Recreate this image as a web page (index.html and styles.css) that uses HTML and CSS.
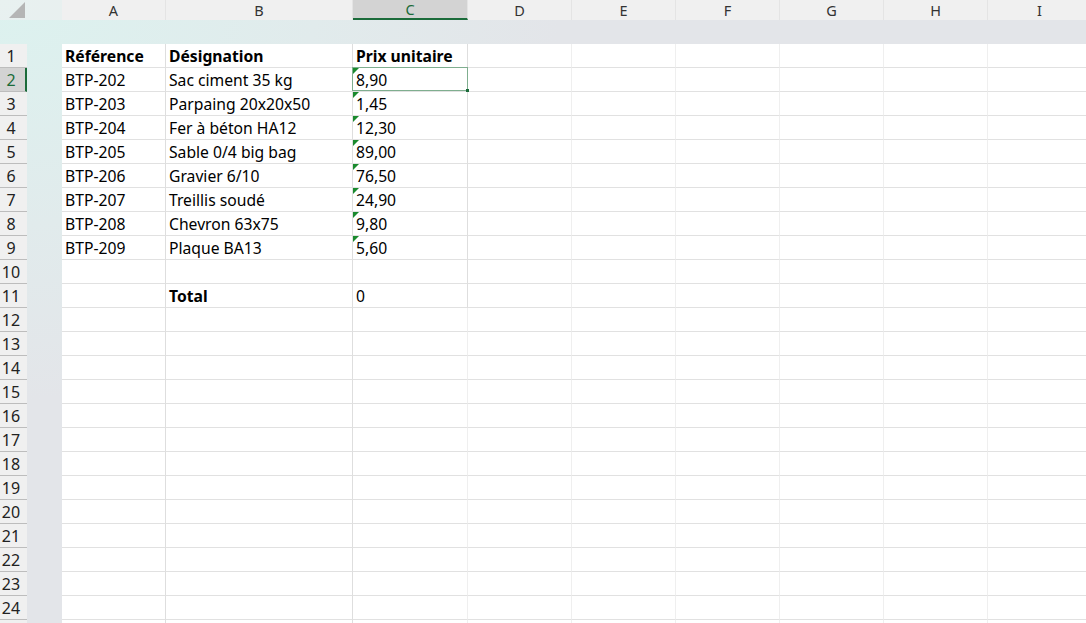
FILE: index.html
```html
<!DOCTYPE html>
<html lang="fr">
<head>
<meta charset="utf-8">
<title>Feuille</title>
<link rel="stylesheet" href="styles.css">
</head>
<body>
<div class="sheet">
  <div class="corner"><span class="tri"></span></div>
  <div class="gap-h"></div>
  <div class="ch">A</div><div class="ch">B</div><div class="ch sel-h">C</div><div class="ch">D</div><div class="ch">E</div><div class="ch">F</div><div class="ch">G</div><div class="ch">H</div><div class="ch">I</div>
  <div class="band"></div>

  <div class="rh">1</div><div class="gap"></div><div class="c b dk">Référence</div><div class="c b dk">Désignation</div><div class="c b dk">Prix unitaire</div><div class="c"></div><div class="c"></div><div class="c"></div><div class="c"></div><div class="c"></div><div class="c"></div>
  <div class="rh sel-r">2</div><div class="gap"></div><div class="c dk">BTP-202</div><div class="c dk">Sac ciment 35 kg</div><div class="c dk t sel">8,90<span class="box"><span class="handle"></span></span></div><div class="c"></div><div class="c"></div><div class="c"></div><div class="c"></div><div class="c"></div><div class="c"></div>
  <div class="rh">3</div><div class="gap"></div><div class="c dk">BTP-203</div><div class="c dk">Parpaing 20x20x50</div><div class="c dk t">1,45</div><div class="c"></div><div class="c"></div><div class="c"></div><div class="c"></div><div class="c"></div><div class="c"></div>
  <div class="rh">4</div><div class="gap"></div><div class="c dk">BTP-204</div><div class="c dk">Fer à béton HA12</div><div class="c dk t">12,30</div><div class="c"></div><div class="c"></div><div class="c"></div><div class="c"></div><div class="c"></div><div class="c"></div>
  <div class="rh">5</div><div class="gap"></div><div class="c dk">BTP-205</div><div class="c dk">Sable 0/4 big bag</div><div class="c dk t">89,00</div><div class="c"></div><div class="c"></div><div class="c"></div><div class="c"></div><div class="c"></div><div class="c"></div>
  <div class="rh">6</div><div class="gap"></div><div class="c dk">BTP-206</div><div class="c dk">Gravier 6/10</div><div class="c dk t">76,50</div><div class="c"></div><div class="c"></div><div class="c"></div><div class="c"></div><div class="c"></div><div class="c"></div>
  <div class="rh">7</div><div class="gap"></div><div class="c dk">BTP-207</div><div class="c dk">Treillis soudé</div><div class="c dk t">24,90</div><div class="c"></div><div class="c"></div><div class="c"></div><div class="c"></div><div class="c"></div><div class="c"></div>
  <div class="rh">8</div><div class="gap"></div><div class="c dk">BTP-208</div><div class="c dk">Chevron 63x75</div><div class="c dk t">9,80</div><div class="c"></div><div class="c"></div><div class="c"></div><div class="c"></div><div class="c"></div><div class="c"></div>
  <div class="rh">9</div><div class="gap"></div><div class="c dk">BTP-209</div><div class="c dk">Plaque BA13</div><div class="c dk t">5,60</div><div class="c"></div><div class="c"></div><div class="c"></div><div class="c"></div><div class="c"></div><div class="c"></div>
  <div class="rh">10</div><div class="gap"></div><div class="c dk"></div><div class="c dk"></div><div class="c dk"></div><div class="c"></div><div class="c"></div><div class="c"></div><div class="c"></div><div class="c"></div><div class="c"></div>
  <div class="rh">11</div><div class="gap"></div><div class="c dk"></div><div class="c b dk">Total</div><div class="c dk">0</div><div class="c"></div><div class="c"></div><div class="c"></div><div class="c"></div><div class="c"></div><div class="c"></div>
  <div class="rh">12</div><div class="gap"></div><div class="c dk"></div><div class="c dk"></div><div class="c"></div><div class="c"></div><div class="c"></div><div class="c"></div><div class="c"></div><div class="c"></div><div class="c"></div>
  <div class="rh">13</div><div class="gap"></div><div class="c dk"></div><div class="c dk"></div><div class="c"></div><div class="c"></div><div class="c"></div><div class="c"></div><div class="c"></div><div class="c"></div><div class="c"></div>
  <div class="rh">14</div><div class="gap"></div><div class="c dk"></div><div class="c dk"></div><div class="c"></div><div class="c"></div><div class="c"></div><div class="c"></div><div class="c"></div><div class="c"></div><div class="c"></div>
  <div class="rh">15</div><div class="gap"></div><div class="c dk"></div><div class="c dk"></div><div class="c"></div><div class="c"></div><div class="c"></div><div class="c"></div><div class="c"></div><div class="c"></div><div class="c"></div>
  <div class="rh">16</div><div class="gap"></div><div class="c dk"></div><div class="c dk"></div><div class="c"></div><div class="c"></div><div class="c"></div><div class="c"></div><div class="c"></div><div class="c"></div><div class="c"></div>
  <div class="rh">17</div><div class="gap"></div><div class="c dk"></div><div class="c dk"></div><div class="c"></div><div class="c"></div><div class="c"></div><div class="c"></div><div class="c"></div><div class="c"></div><div class="c"></div>
  <div class="rh">18</div><div class="gap"></div><div class="c dk"></div><div class="c dk"></div><div class="c"></div><div class="c"></div><div class="c"></div><div class="c"></div><div class="c"></div><div class="c"></div><div class="c"></div>
  <div class="rh">19</div><div class="gap"></div><div class="c dk"></div><div class="c dk"></div><div class="c"></div><div class="c"></div><div class="c"></div><div class="c"></div><div class="c"></div><div class="c"></div><div class="c"></div>
  <div class="rh">20</div><div class="gap"></div><div class="c dk"></div><div class="c dk"></div><div class="c"></div><div class="c"></div><div class="c"></div><div class="c"></div><div class="c"></div><div class="c"></div><div class="c"></div>
  <div class="rh">21</div><div class="gap"></div><div class="c dk"></div><div class="c dk"></div><div class="c"></div><div class="c"></div><div class="c"></div><div class="c"></div><div class="c"></div><div class="c"></div><div class="c"></div>
  <div class="rh">22</div><div class="gap"></div><div class="c dk"></div><div class="c dk"></div><div class="c"></div><div class="c"></div><div class="c"></div><div class="c"></div><div class="c"></div><div class="c"></div><div class="c"></div>
  <div class="rh">23</div><div class="gap"></div><div class="c dk"></div><div class="c dk"></div><div class="c"></div><div class="c"></div><div class="c"></div><div class="c"></div><div class="c"></div><div class="c"></div><div class="c"></div>
  <div class="rh">24</div><div class="gap"></div><div class="c dk"></div><div class="c dk"></div><div class="c"></div><div class="c"></div><div class="c"></div><div class="c"></div><div class="c"></div><div class="c"></div><div class="c"></div>
  <div class="rh"></div><div class="gap"></div><div class="c dk"></div><div class="c dk"></div><div class="c"></div><div class="c"></div><div class="c"></div><div class="c"></div><div class="c"></div><div class="c"></div><div class="c"></div>
</div>
</body>
</html>
```

FILE: styles.css
```css
html, body {
  margin: 0;
  padding: 0;
  overflow: hidden;
  background: #ffffff;
}

.sheet {
  width: 1086px;
  height: 623px;
  overflow: hidden;
  display: grid;
  grid-template-columns: 27px 35px 104px 187px 115px 104px 104px 104px 104px 104px 104px;
  grid-template-rows: 20px 24px;
  grid-auto-rows: 24px;
  font-family: "Noto Sans", "Liberation Sans", sans-serif;
  font-size: 15.7px;
  color: #000;
  background: radial-gradient(ellipse 700px 500px at 0 0, #dcf2ef 0%, #e1ebec 45%, #e3e5e9 80%);
}

.corner {
  background: rgba(240, 240, 240, 0.6);
  position: relative;
}

.tri {
  position: absolute;
  right: 2px;
  bottom: 2px;
  width: 0;
  height: 0;
  border-left: 16px solid transparent;
  border-bottom: 16px solid #b5b5b5;
}

.gap-h {
  background: rgba(240, 240, 240, 0.6);
}

.ch {
  background: #f0f0f0;
  color: #333;
  text-align: center;
  line-height: 20px;
  font-size: 14.5px;
  border-right: 1px solid #e4e4e4;
  box-sizing: border-box;
}

.ch.sel-h {
  background: #d3d3d3;
  color: #1b6b3a;
  border-bottom: 2px solid #1b6b3a;
  line-height: 18px;
}

.band {
  grid-column: 1 / -1;
}

.rh {
  background: #f0f0f0;
  color: #222;
  font-size: 16px;
  line-height: 22px;
  padding-top: 1px;
  padding-right: 5px;
  text-align: center;
  border-bottom: 1px solid #bdbdbd;
  box-sizing: border-box;
}

.rh.sel-r {
  background: #d3d3d3;
  color: #1b6b3a;
  border-right: 2px solid #1b6b3a;
  padding-right: 3px;
}

.gap {
  background: transparent;
}

.c {
  background: #fff;
  border-right: 1px solid #efefef;
  border-bottom: 1px solid #e1e1e1;
  box-sizing: border-box;
  padding-left: 3px;
  padding-top: 1px;
  line-height: 22px;
  white-space: nowrap;
  overflow: visible;
  position: relative;
}

.c.dk {
  border-right-color: #dedede;
}

.b {
  font-weight: 700;
}

.t::before {
  content: "";
  position: absolute;
  left: 0;
  top: 0;
  width: 0;
  height: 0;
  border-top: 6px solid #1a8a2e;
  border-right: 6px solid transparent;
}

.sel .box {
  position: absolute;
  left: -1px;
  top: -1px;
  right: -1px;
  bottom: 0;
  border: 1px solid #7fae8f;
  z-index: 2;
}

.handle {
  position: absolute;
  right: -2px;
  bottom: -2px;
  width: 3px;
  height: 3px;
  background: #1b6b3a;
}
```
